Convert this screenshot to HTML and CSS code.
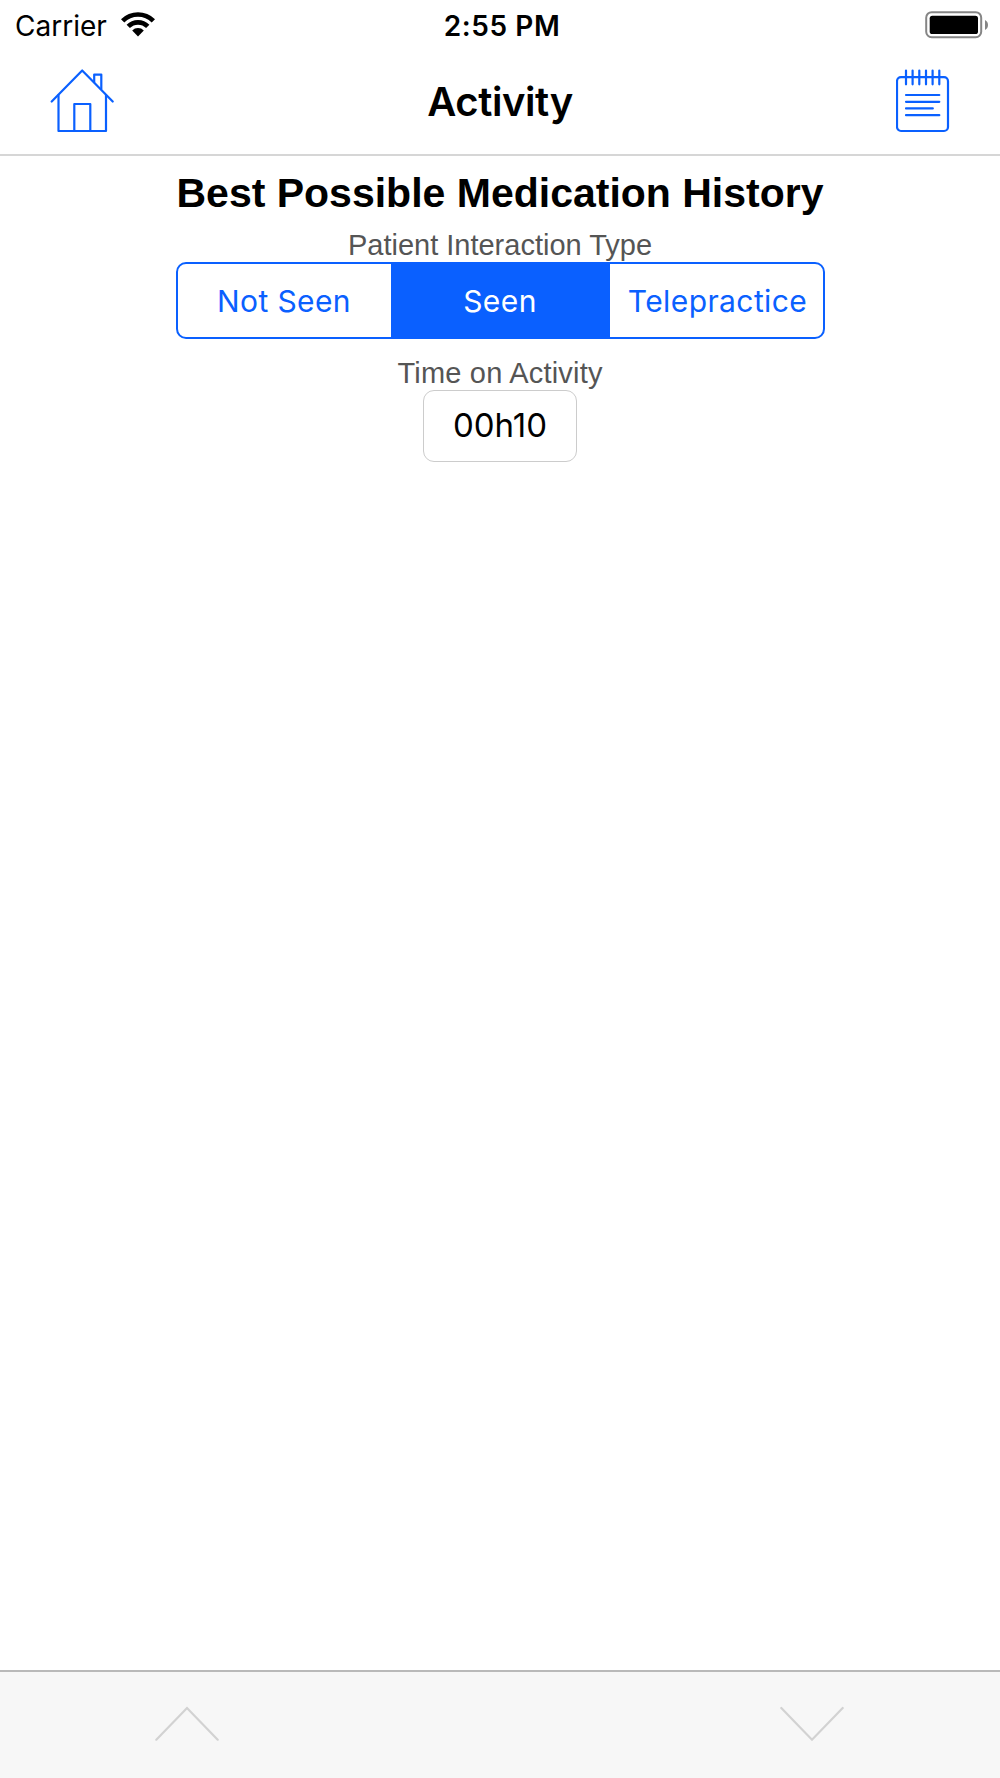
FILE: index.html
```
<!DOCTYPE html>
<html lang="en">
<head>
  <meta charset="UTF-8" />
  <meta name="viewport" content="width=device-width, initial-scale=1.0" />
  <title>Activity</title>
  <link rel="stylesheet" href="styles.css">
</head>
<body>
  <div class="status-bar">
    <div class="carrier">
      <span class="carrier-name">Carrier</span>
      <svg class="wifi" width="34" height="26" viewBox="0 0 34 26">
        <path d="M0 7.2 A24 24 0 0 1 34 7.2 L30.7 10.5 A19.4 19.4 0 0 0 3.3 10.5 Z" />
        <path d="M5.6 12.8 A16.1 16.1 0 0 1 28.4 12.8 L25.1 16.1 A11.4 11.4 0 0 0 8.9 16.1 Z" />
        <path d="M11.2 18.4 A8.2 8.2 0 0 1 22.8 18.4 L17 24.4 Z" />
      </svg>
    </div>
    <span class="clock">2:55 PM</span>
    <svg class="battery" width="64" height="28" viewBox="0 0 64 28">
      <rect x="1.2" y="1.2" width="55" height="25" rx="5.5" fill="none" stroke="#858585" stroke-width="2" />
      <rect x="4.7" y="4.7" width="48.3" height="18.3" rx="2.6" />
      <path d="M60 9 Q63 10.6 63 14 Q63 17.4 60 19 Z" fill="#858585" />
    </svg>
  </div>

  <header class="nav-bar">
    <button class="icon-button">
      <svg width="64" height="64" viewBox="0 0 64 64">
        <path d="M1.7 32.5 L32.2 1.5 L62.7 32.5" />
        <path d="M8.5 26 V62 H56 V26" />
        <path d="M24.3 62 V35 H40.3 V62" />
        <path d="M44.2 13 V5.6 H51.3 V20" />
      </svg>
    </button>
    <h1>Activity</h1>
    <button class="icon-button">
      <svg width="54" height="64" viewBox="0 0 54 64">
        <rect x="1" y="8.2" width="51" height="53.8" rx="4" />
        <path d="M10 1.5 V15.3 M16.6 1.5 V15.3 M23.3 1.5 V15.3 M30 1.5 V15.3 M36.6 1.5 V15.3 M43.3 1.5 V15.3" />
        <path d="M10 26 H43.3 M10 32.8 H43.3 M10 39.4 H36.8 M10 46.2 H43.3" />
      </svg>
    </button>
  </header>

  <main class="content">
    <h2>Best Possible Medication History</h2>
    <div class="label">Patient Interaction Type</div>
    <div class="segments">
      <button class="segment">Not Seen</button>
      <button class="segment selected">Seen</button>
      <button class="segment">Telepractice</button>
    </div>
    <div class="label time-label">Time on Activity</div>
    <div class="time-box">00h10</div>
  </main>

  <footer class="toolbar">
    <svg width="64" height="36" viewBox="0 0 64 36">
      <path d="M1.3 33.7 L32 2 L62.7 33.7" />
    </svg>
    <svg width="64" height="36" viewBox="0 0 64 36">
      <path d="M1.3 2 L32 33.7 L62.7 2" />
    </svg>
  </footer>
</body>
</html>
```
FILE: styles.css
```
* {
  box-sizing: border-box;
}

body {
  font-family: Inter, sans-serif;
  background-color: #fff;
  color: #000;
  margin: 0;
  height: 1778px;
  display: flex;
  flex-direction: column;
}

h1, h2 {
  margin: 0;
}

button {
  font: inherit;
  border: none;
  background: none;
  padding: 0;
}

svg {
  display: block;
}

.status-bar {
  height: 50px;
  padding: 1px 11px 0 15px;
  display: grid;
  grid-template-columns: 1fr auto 1fr;
  align-items: center;
  font-size: 28px;
}

.carrier {
  display: flex;
  align-items: center;
  gap: 14px;
}

.wifi {
  margin-bottom: 2px;
}

.clock {
  font-weight: 600;
  letter-spacing: 0.6px;
}

.battery {
  justify-self: end;
  margin-bottom: 2px;
}

.nav-bar {
  height: 106px;
  padding: 0 50px 2px;
  display: grid;
  grid-template-columns: 1fr auto 1fr;
  align-items: center;
  border-bottom: 2px solid #d6d6d6;
}

.nav-bar h1 {
  font-size: 40px;
  font-weight: 600;
  letter-spacing: -0.4px;
}

.icon-button {
  justify-self: start;
}

.icon-button:last-child {
  justify-self: end;
}

.icon-button svg {
  fill: none;
  stroke: #0a60ff;
  stroke-width: 2.2;
  stroke-linecap: round;
  stroke-linejoin: round;
}

.content {
  flex: 1;
  display: flex;
  flex-direction: column;
  align-items: center;
}

.content h2 {
  font-family: "Liberation Sans", Arial, sans-serif;
  font-size: 41px;
  line-height: 46px;
  margin-top: 14px;
  white-space: nowrap;
}

.label {
  font-family: "Liberation Sans", Arial, sans-serif;
  font-size: 29px;
  line-height: 30px;
  color: #555;
  margin: 14px 0 2px;
}

.segments {
  width: 649px;
  height: 77px;
  display: grid;
  grid-template-columns: 1fr 219px 1fr;
  border: 2px solid #0a60ff;
  border-radius: 10px;
}

.segment {
  font-size: 30px;
  letter-spacing: 0.4px;
  color: #0a60ff;
}

.segment:last-child {
  padding-left: 3px;
}

.segment.selected {
  background-color: #0a60ff;
  color: #fff;
}

.time-label {
  margin-top: 19px;
  letter-spacing: 0.2px;
}

.time-box {
  width: 154px;
  height: 72px;
  line-height: 68px;
  font-size: 33px;
  text-align: center;
  border: 1px solid #ccc;
  border-radius: 11px;
}

.toolbar {
  height: 108px;
  padding: 34px 156px 0 155px;
  display: flex;
  justify-content: space-between;
  background-color: #f7f7f7;
  border-top: 2px solid #b9b9b9;
}

.toolbar svg {
  fill: none;
  stroke: #d2d2d2;
  stroke-width: 2.2;
  stroke-linecap: round;
}
```
